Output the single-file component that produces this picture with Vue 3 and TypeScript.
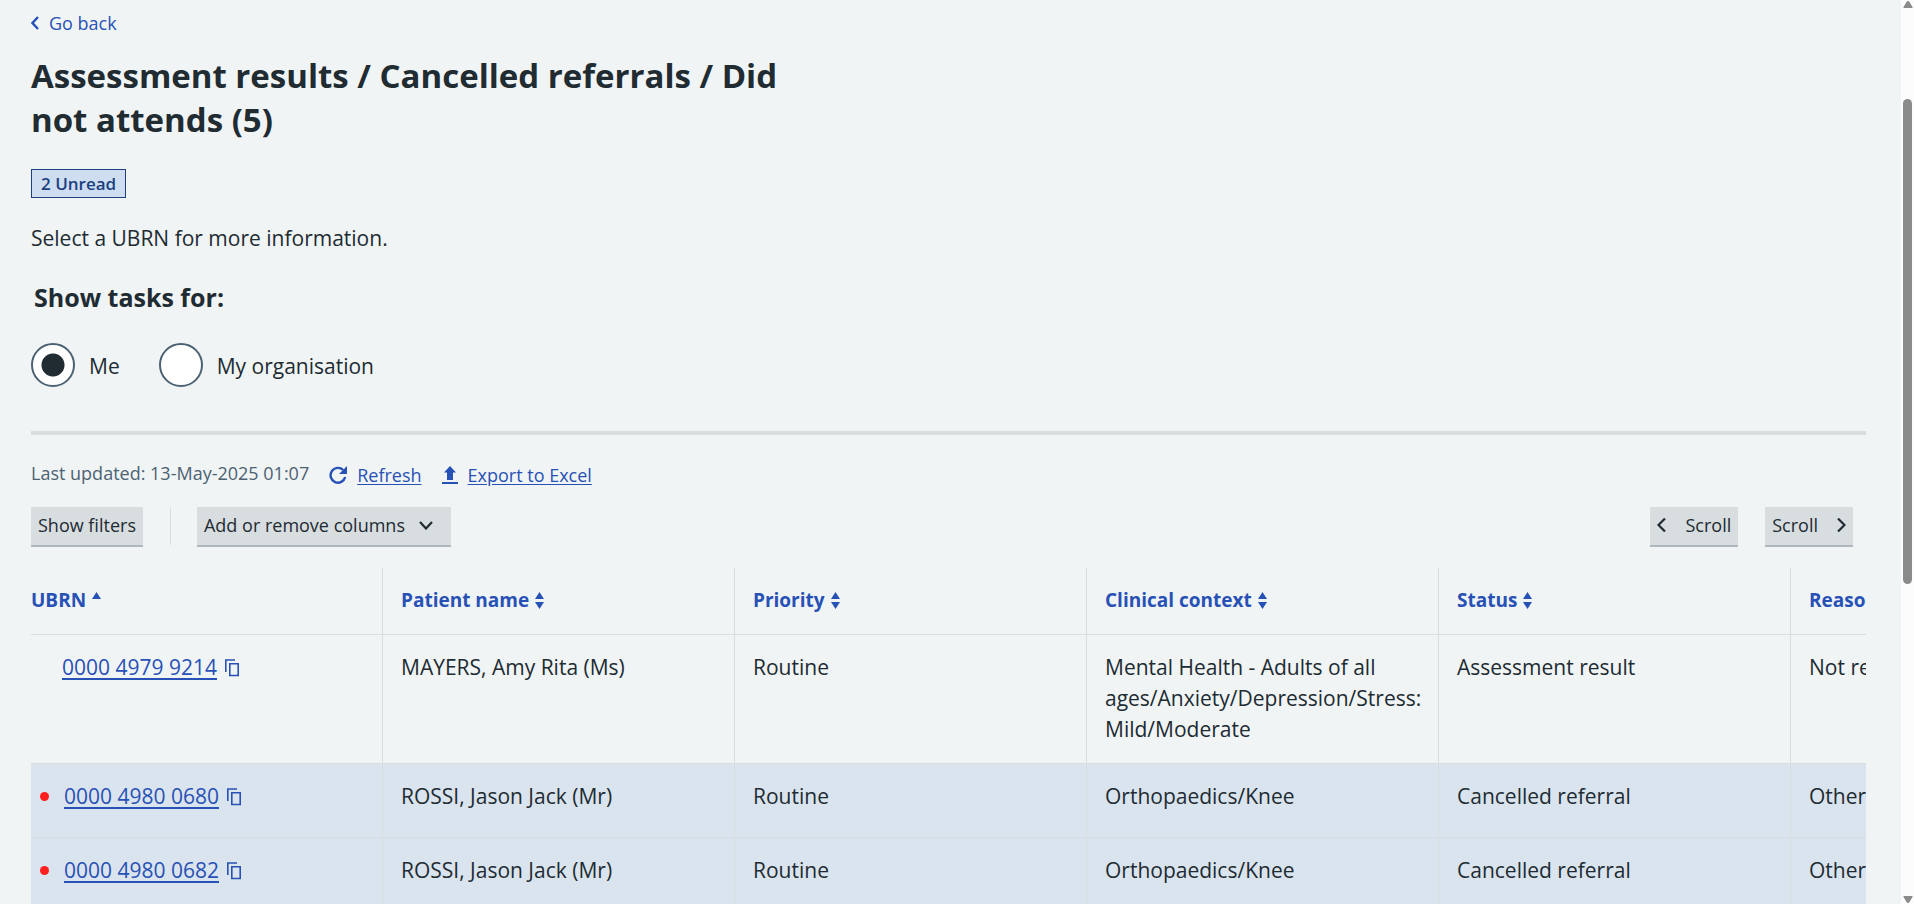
<script setup lang="ts">
import { ref } from 'vue'

interface Task {
  ubrn: string
  patient: string
  priority: string
  context: string
  status: string
  reason: string
  unread: boolean
}

const scope = ref<'me' | 'organisation'>('me')

const columns = ['UBRN', 'Patient name', 'Priority', 'Clinical context', 'Status', 'Reason']

const tasks: Task[] = [
  {
    ubrn: '0000 4979 9214',
    patient: 'MAYERS, Amy Rita (Ms)',
    priority: 'Routine',
    context: 'Mental Health - Adults of all ages/Anxiety/Depression/Stress: Mild/Moderate',
    status: 'Assessment result',
    reason: 'Not relevant',
    unread: false,
  },
  {
    ubrn: '0000 4980 0680',
    patient: 'ROSSI, Jason Jack (Mr)',
    priority: 'Routine',
    context: 'Orthopaedics/Knee',
    status: 'Cancelled referral',
    reason: 'Other',
    unread: true,
  },
  {
    ubrn: '0000 4980 0682',
    patient: 'ROSSI, Jason Jack (Mr)',
    priority: 'Routine',
    context: 'Orthopaedics/Knee',
    status: 'Cancelled referral',
    reason: 'Other',
    unread: true,
  },
]
</script>

<template>
  <div class="page">
    <main class="content">
      <a class="back" href="#">
        <svg width="8" height="14" viewBox="0 0 8 14" aria-hidden="true">
          <path d="M7 1 1.5 7 7 13" fill="none" stroke="currentColor" stroke-width="2.4" />
        </svg>
        Go back
      </a>

      <h1>Assessment results / Cancelled referrals / Did not attends (5)</h1>
      <strong class="tag">2 Unread</strong>
      <p class="intro">Select a UBRN for more information.</p>

      <fieldset class="scope">
        <legend>Show tasks for:</legend>
        <div class="radios">
          <label class="radio">
            <input v-model="scope" type="radio" name="scope" value="me" />
            <span>Me</span>
          </label>
          <label class="radio">
            <input v-model="scope" type="radio" name="scope" value="organisation" />
            <span>My organisation</span>
          </label>
        </div>
      </fieldset>

      <hr />

      <div class="actions">
        <span class="updated">Last updated: 13-May-2025 01:07</span>
        <a class="action" href="#">
          <svg width="18" height="18" viewBox="0 0 18 18" aria-hidden="true">
            <path d="M14.2 4A7.4 7.4 0 1 0 16.2 11" fill="none" stroke="currentColor" stroke-width="2.4" />
            <path d="M18 0v8h-8z" fill="currentColor" />
          </svg>
          <span>Refresh</span>
        </a>
        <a class="action" href="#">
          <svg width="16" height="18" viewBox="0 0 16 18" aria-hidden="true">
            <path d="M8 0l6 6.5h-3V14H5V6.5H2zM0 16h16v2H0z" fill="currentColor" />
          </svg>
          <span>Export to Excel</span>
        </a>
      </div>

      <div class="toolbar">
        <button type="button" class="button">Show filters</button>
        <span class="divider"></span>
        <button type="button" class="button button-menu">
          Add or remove columns
          <svg width="14" height="9" viewBox="0 0 14 9" aria-hidden="true">
            <path d="M1 1l6 6.5L13 1" fill="none" stroke="currentColor" stroke-width="2.2" />
          </svg>
        </button>
        <div class="scrollers">
          <button type="button" class="button button-scroll">
            <svg width="9" height="14" viewBox="0 0 9 14" aria-hidden="true">
              <path d="M8 .5 1.5 7 8 13.5" fill="none" stroke="currentColor" stroke-width="2.2" />
            </svg>
            Scroll
          </button>
          <button type="button" class="button button-scroll">
            Scroll
            <svg width="9" height="14" viewBox="0 0 9 14" aria-hidden="true">
              <path d="M1 .5 7.5 7 1 13.5" fill="none" stroke="currentColor" stroke-width="2.2" />
            </svg>
          </button>
        </div>
      </div>

      <div class="table-wrap">
        <table>
          <thead>
            <tr>
              <th v-for="(column, index) in columns" :key="column" scope="col">
                <button type="button" class="sort">
                  {{ column }}
                  <svg width="9" height="17" viewBox="0 0 9 17" aria-hidden="true">
                    <path d="M4.5 0 9 7H0z" fill="currentColor" />
                    <path v-if="index > 0" d="M0 10h9l-4.500 7z" fill="currentColor" />
                  </svg>
                </button>
              </th>
            </tr>
          </thead>
          <tbody>
            <tr v-for="task in tasks" :key="task.ubrn" :class="{ unread: task.unread }">
              <td>
                <div class="reference">
                  <span v-if="task.unread" class="dot"></span>
                  <a class="ubrn" href="#">{{ task.ubrn }}</a>
                  <button type="button" class="copy" :aria-label="'Copy ' + task.ubrn">
                    <svg width="14" height="18" viewBox="0 0 14 18" aria-hidden="true">
                      <path d="M.8 13V1H10M4.8 4.8h8.400v11.700H4.800z" fill="none" stroke="currentColor" stroke-width="1.6" />
                    </svg>
                  </button>
                </div>
              </td>
              <td>{{ task.patient }}</td>
              <td>{{ task.priority }}</td>
              <td>{{ task.context }}</td>
              <td>{{ task.status }}</td>
              <td>{{ task.reason }}</td>
            </tr>
          </tbody>
        </table>
      </div>
    </main>

    <div class="rail" aria-hidden="true">
      <svg width="10" height="7" viewBox="0 0 10 7">
        <path d="M5 0Q6 0 6.5 1L9.5 6Q10 7 9 7H1Q0 7 .5 6L3.5 1Q4 0 5 0z" fill="#8b8b8b" />
      </svg>
      <div class="thumb"></div>
      <svg width="10" height="7" viewBox="0 0 10 7">
        <path d="M5 7Q6 7 6.5 6L9.5 1Q10 0 9 0H1Q0 0 .5 1L3.5 6Q4 7 5 7z" fill="#8b8b8b" />
      </svg>
    </div>
  </div>
</template>

<style>
body {
  margin: 0;
  background: #f0f4f5;
}
</style>

<style scoped>
.page {
  display: flex;
  height: 100vh;
  overflow: hidden;
  color: #212b32;
  background: #f0f4f5;
  font-family: "Open Sans", "Noto Sans", sans-serif;
  font-size: 21px;
  line-height: 30px;
}

.content {
  flex: 1;
  min-width: 0;
  padding: 11px 35px 0 31px;
}

a,
.sort,
.copy {
  color: #2851b5;
}

button {
  padding: 0;
  border: 0;
  background: none;
  font: inherit;
  cursor: pointer;
}

svg {
  flex: none;
}

.back {
  display: flex;
  align-items: center;
  gap: 10px;
  width: fit-content;
  font-size: 18px;
  line-height: 24px;
  text-decoration: none;
}

h1 {
  max-width: 780px;
  margin: 19px 0 27px;
  font-size: 33px;
  font-weight: 700;
  line-height: 44px;
}

.tag {
  display: block;
  width: fit-content;
  padding: 0 9px;
  border: 1px solid #1c3f80;
  background: #cfddf0;
  color: #1c3f80;
  font-size: 17px;
  font-weight: 600;
  line-height: 27px;
}

.intro {
  margin: 25px 0 28px;
}

.scope {
  margin: 0;
  padding: 0;
  border: 0;
}

legend {
  padding: 0 3px;
  font-size: 25px;
  font-weight: 700;
  line-height: 32px;
}

.radios {
  display: flex;
  gap: 39px;
  padding-top: 30px;
}

.radio {
  display: flex;
  align-items: center;
  gap: 14px;
}

.radio span {
  padding-top: 2px;
}

.radio input {
  appearance: none;
  width: 44px;
  height: 44px;
  margin: 0;
  border: 2px solid #4c6272;
  border-radius: 50%;
  background: #fff;
}

.radio input:checked {
  background: radial-gradient(circle, #212b32 11px, #fff 12px);
}

hr {
  height: 4px;
  margin: 44px 0 26px;
  border: 0;
  background: #d8dde0;
}

.actions {
  display: flex;
  gap: 20px;
  font-size: 18px;
  line-height: 24px;
}

.updated {
  color: #4c6272;
}

.action {
  display: flex;
  align-items: center;
  gap: 10px;
  padding-top: 2px;
  text-decoration: none;
}

.action span {
  text-decoration: underline;
  text-underline-offset: 2px;
}

.toolbar {
  display: flex;
  margin: 20px 0 23px;
}

.button {
  display: flex;
  align-items: center;
  height: 38px;
  padding: 0 7px 2px;
  background: #d8dde0;
  box-shadow: 0 2px 0 #aeb7bd;
  color: #212b32;
  font-size: 18px;
}

.divider {
  width: 1px;
  margin: 0 26px 0 27px;
  background: #d8dde0;
}

.button-menu {
  gap: 14px;
  padding-right: 18px;
}

.scrollers {
  display: flex;
  gap: 27px;
  margin-left: auto;
  padding-right: 13px;
}

.button-scroll {
  gap: 19px;
}

.table-wrap {
  overflow: hidden;
}

table {
  width: 2112px;
  table-layout: fixed;
  border-collapse: separate;
  border-spacing: 0;
}

th,
td {
  box-sizing: border-box;
  padding: 17px 8px 18px 18px;
  border-right: 1px solid #d8dde0;
  border-bottom: 1px solid #d8dde0;
  text-align: left;
  vertical-align: top;
  line-height: 31px;
}

th:first-child,
td:first-child {
  padding-left: 0;
}

.sort {
  display: flex;
  align-items: center;
  gap: 6px;
  font-size: 19px;
  font-weight: 700;
  line-height: 31px;
}

.unread td {
  height: 74px;
  background: #dae4ee;
}

.reference {
  display: flex;
  align-items: center;
  padding-left: 31px;
}

.unread .reference {
  padding-left: 9px;
}

.dot {
  width: 9px;
  height: 9px;
  margin-right: 15px;
  border-radius: 50%;
  background: #ff1f1f;
}

.ubrn {
  text-decoration-thickness: 2px;
  text-underline-offset: 3px;
}

.copy {
  display: flex;
  margin-left: 8px;
}

.rail {
  display: flex;
  flex-direction: column;
  align-items: center;
  box-sizing: border-box;
  width: 13px;
  height: 100vh;
  padding: 1px 0;
  background: #fcfcfc;
}

.thumb {
  width: 9px;
  height: 485px;
  margin: 91px 0 auto;
  border-radius: 5px;
  background: #8b8b8b;
}
</style>
